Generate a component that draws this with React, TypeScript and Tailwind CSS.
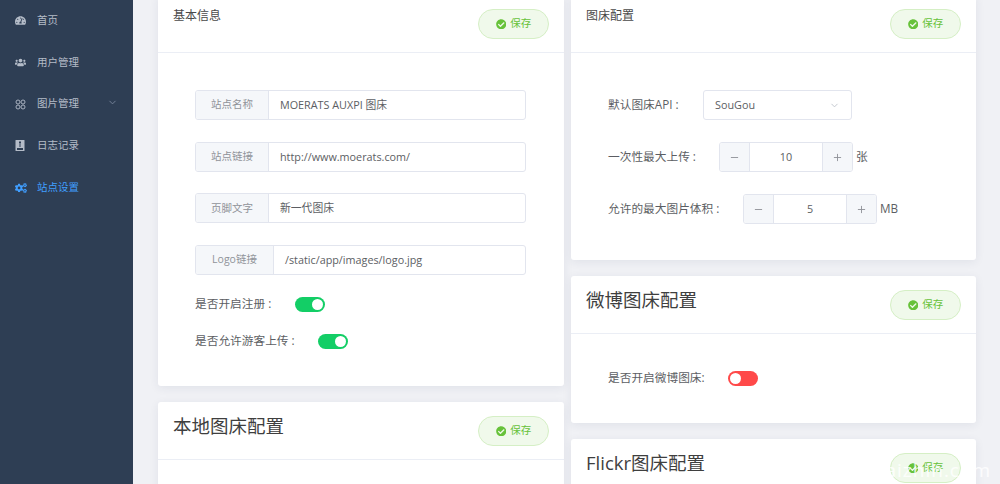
import { ChevronDown, Minus, Plus } from "lucide-react";
import type { ReactNode } from "react";
import { FaCheckCircle, FaCogs, FaTachometerAlt, FaUsers } from "react-icons/fa";

function ImagesIcon() {
	return (
		<svg width="11" height="11" viewBox="0 0 11 11" fill="none" stroke="currentColor" strokeWidth="0.9">
			<circle cx="3" cy="3" r="2" />
			<circle cx="8" cy="3" r="2" />
			<circle cx="3" cy="8" r="2" />
			<circle cx="8" cy="8" r="2" />
		</svg>
	);
}

function LogIcon() {
	return (
		<svg width="10" height="11" viewBox="0 0 10 11">
			<rect x="0.5" y="0" width="9" height="11" rx="0.5" fill="currentColor" />
			<rect x="2" y="8" width="6" height="2" fill="#2e3e54" />
			<rect x="4" y="1.5" width="2" height="2" fill="#2e3e54" />
			<rect x="4.5" y="4" width="1" height="3" fill="#2e3e54" />
		</svg>
	);
}

const menu = [
	{ label: "首页", icon: <FaTachometerAlt size={11} /> },
	{ label: "用户管理", icon: <FaUsers size={11} /> },
	{ label: "图片管理", icon: <ImagesIcon />, arrow: true },
	{ label: "日志记录", icon: <LogIcon /> },
	{ label: "站点设置", icon: <FaCogs size={12} />, active: true },
];

function Sidebar() {
	return (
		<aside className="w-[133px] h-full shrink-0 bg-[#2e3e54]">
			{menu.map((item) => (
				<div
					key={item.label}
					className={`h-[41.7px] flex items-center px-[15px] text-[10.5px] ${item.active ? "text-[#409eff]" : "text-[#b4bcc8]"}`}
				>
					<span className="w-[22px] flex items-center">{item.icon}</span>
					<span className="flex-1">{item.label}</span>
					{item.arrow && <ChevronDown size={11} className="text-[#77849a] -mt-[3px]" />}
				</div>
			))}
		</aside>
	);
}

function SaveButton() {
	return (
		<button className="w-[71px] h-[30px] shrink-0 flex items-center justify-center gap-[4px] rounded-full border border-[#d5efc5] bg-[#f0f9eb] text-[10.5px] text-[#67c23a]">
			<FaCheckCircle size={10.5} />
			保存
		</button>
	);
}

function Card({ title, small, children }: { title: string; small?: boolean; children?: ReactNode }) {
	return (
		<section className="bg-white rounded-[3px] shadow-[0_2px_10px_rgba(40,50,90,0.08)]">
			<header className="h-[58px] px-[15px] pt-[14px] flex justify-between items-start border-b border-[#ebeef5]">
				<h2 className={small ? "-mt-[1px] text-[12px] leading-[16px] text-[#4a4a4a]" : "-mt-[2px] text-[18.5px] leading-[24px] text-[#3f3f3f]"}>
					{title}
				</h2>
				<SaveButton />
			</header>
			{children}
		</section>
	);
}

function InputGroup({ label, value, wide }: { label: string; value: string; wide?: boolean }) {
	return (
		<div className="h-[30px] flex rounded-[3px] border border-[#e2e5ee] overflow-hidden">
			<div className={`${wide ? "w-[78px]" : "w-[73px]"} shrink-0 flex items-center justify-center border-r border-[#e2e5ee] bg-[#f5f7fa] text-[10.5px] text-[#909399]`}>
				{label}
			</div>
			<div className="flex-1 flex items-center pl-[11px] text-[10.8px] text-[#5c5e63]">{value}</div>
		</div>
	);
}

function Toggle({ on }: { on: boolean }) {
	return (
		<span className={`w-[30px] h-[15px] p-[2px] rounded-full flex ${on ? "bg-[#13ce66] justify-end" : "bg-[#ff4949] justify-start"}`}>
			<span className="w-[11px] h-[11px] rounded-full bg-white" />
		</span>
	);
}

function ToggleRow({ label, on, labelWidth }: { label: string; on: boolean; labelWidth: string }) {
	return (
		<div className="h-[16px] flex items-center text-[11.7px] text-[#5c5e63]">
			<span className={labelWidth}>{label}</span>
			<Toggle on={on} />
		</div>
	);
}

function NumberInput({ value, unit }: { value: string; unit: string }) {
	return (
		<div className="flex items-center">
			<div className="w-[134px] h-[30px] flex rounded-[3px] border border-[#e2e5ee] overflow-hidden">
				<span className="w-[30px] flex items-center justify-center border-r border-[#e2e5ee] bg-[#f5f7fa] text-[#8f9298]">
					<Minus size={11} />
				</span>
				<span className="flex-1 flex items-center justify-center text-[10.8px] text-[#5c5e63]">{value}</span>
				<span className="w-[30px] flex items-center justify-center border-l border-[#e2e5ee] bg-[#f5f7fa] text-[#8f9298]">
					<Plus size={11} />
				</span>
			</div>
			<span className="ml-[3px] text-[11.7px] text-[#5c5e63]">{unit}</span>
		</div>
	);
}

export default function App() {
	return (
		<div className="relative w-[1000px] h-[484px] overflow-hidden flex bg-[#f0f1f5] font-['Open_Sans','Noto_Sans_CJK_SC',sans-serif]">
			<Sidebar />
			<main className="flex-1 flex gap-[7px] pl-[25px] -mt-[5px]">
				<div className="w-[406px] shrink-0 flex flex-col gap-[16px]">
					<Card title="基本信息" small>
						<div className="pt-[37px] pb-[37px] pl-[37px] pr-[38px] flex flex-col">
							<div className="flex flex-col gap-[21.7px]">
								<InputGroup label="站点名称" value="MOERATS AUXPI 图床" />
								<InputGroup label="站点链接" value="http://www.moerats.com/" />
								<InputGroup label="页脚文字" value="新一代图床" />
								<InputGroup label="Logo链接" value="/static/app/images/logo.jpg" wide />
							</div>
							<div className="mt-[21px] flex flex-col gap-[21px]">
								<ToggleRow label="是否开启注册 :" on labelWidth="w-[100px]" />
								<ToggleRow label="是否允许游客上传 :" on labelWidth="w-[123px]" />
							</div>
						</div>
					</Card>
					<Card title="本地图床配置">
						<div className="h-[60px]" />
					</Card>
				</div>
				<div className="w-[405px] shrink-0 flex flex-col gap-[16px]">
					<Card title="图床配置" small>
						<div className="pt-[37px] pb-[36px] pl-[37px] flex flex-col gap-[22px] text-[11.7px] text-[#5c5e63]">
							<div className="flex items-center">
								<span className="w-[95px]">默认图床API :</span>
								<div className="w-[149px] h-[30px] flex items-center justify-between px-[11px] rounded-[3px] border border-[#e2e5ee] text-[10.8px]">
									SouGou
									<ChevronDown size={11} className="text-[#c0c4cc]" />
								</div>
							</div>
							<div className="flex items-center">
								<span className="w-[111px]">一次性最大上传 :</span>
								<NumberInput value="10" unit="张" />
							</div>
							<div className="flex items-center">
								<span className="w-[135px]">允许的最大图片体积 :</span>
								<NumberInput value="5" unit="MB" />
							</div>
						</div>
					</Card>
					<Card title="微博图床配置">
						<div className="pt-[36px] pb-[37px] pl-[37px]">
							<ToggleRow label="是否开启微博图床:" on={false} labelWidth="w-[120px]" />
						</div>
					</Card>
					<Card title="Flickr图床配置">
						<div className="h-[60px]" />
					</Card>
				</div>
			</main>
			<span className="absolute right-[9px] top-[458px] text-[19px] leading-[24px] tracking-[1px] text-white/80">aizhin.com</span>
		</div>
	);
}
